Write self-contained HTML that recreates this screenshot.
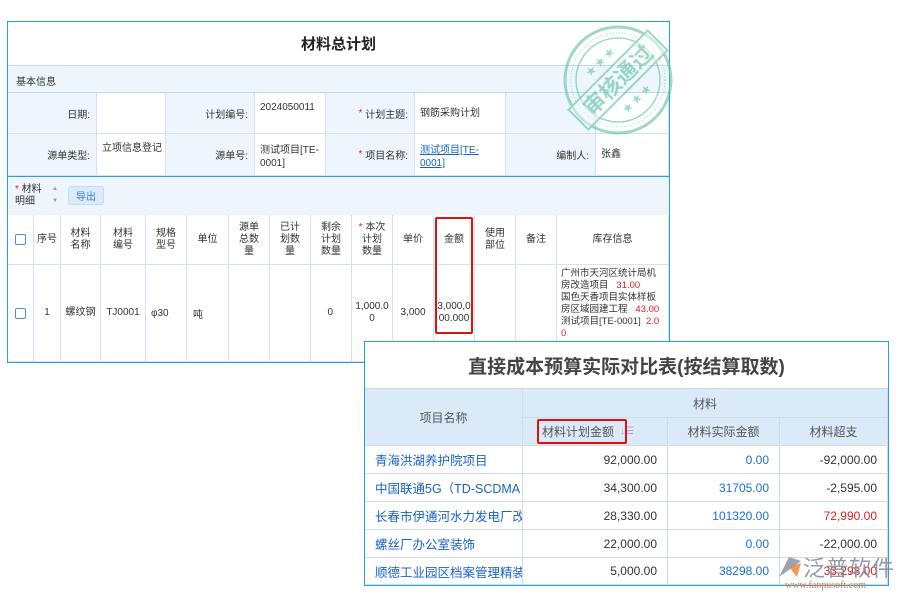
<!DOCTYPE html>
<html><head><meta charset="utf-8"><style>
*{box-sizing:border-box;margin:0;padding:0}
body{width:900px;height:600px;background:#fff;position:relative;overflow:hidden;font-family:"Liberation Sans","Noto Sans CJK SC",sans-serif;font-size:10px;color:#333}
.a{position:absolute}
.p1{left:7px;top:21px;width:663px;height:342px;border:1px solid #2a9ee0;background:#fff}
.c{position:absolute;border-right:1px solid #d6e3ee;border-bottom:1px solid #d6e3ee;display:flex;align-items:center;font-size:10px}
.lb{background:#eef5fd;justify-content:flex-end;padding-right:6px}
.v{background:#fff;padding-left:5px;align-items:flex-start;padding-top:8px;line-height:13px}
.h{background:#fff;justify-content:center;text-align:center;line-height:12px}
.r{color:#e02020}
.p2{left:364px;top:341px;width:525px;height:245px;border:1px solid #2a9ee0;background:#fff}
.t2{position:absolute;border-right:1px solid #d0dde8;border-bottom:1px solid #d0dde8;display:flex;align-items:center;font-size:12px}
.hd{background:#dbeaf9;justify-content:center;color:#555}
.nm{color:#1a63c6;padding-left:10px;white-space:nowrap;overflow:hidden;font-size:12.5px}
.num{justify-content:flex-end;padding-right:10px}
.bl{color:#1a6fe0}
</style></head><body>
<div class="a p1"></div>
<div class="a" style="left:8px;top:22px;width:661px;height:43px;display:flex;align-items:center;justify-content:center;font-size:15px;font-weight:bold;color:#222">材料总计划</div>
<div class="a" style="left:8px;top:65px;width:661px;height:28px;background:#eef5fd;border-top:1px solid #bfd9ef;border-bottom:1px solid #bfd9ef;padding:7px 8px;font-size:10px">基本信息</div>
<div class="c lb" style="left:8px;top:93px;width:89px;height:41px">日期:</div>
<div class="c v" style="left:97px;top:93px;width:69px;height:41px"></div>
<div class="c lb" style="left:166px;top:93px;width:89px;height:41px">计划编号:</div>
<div class="c v" style="left:255px;top:93px;width:71px;height:41px">2024050011</div>
<div class="c lb" style="left:326px;top:93px;width:89px;height:41px"><span class="r">*</span>&nbsp;计划主题:</div>
<div class="c v" style="left:415px;top:93px;width:91px;height:41px;align-items:center;padding-top:0">钢筋采购计划</div>
<div class="c lb" style="left:506px;top:93px;width:90px;height:41px"></div>
<div class="c v" style="left:596px;top:93px;width:73px;height:41px"></div>
<div class="c lb" style="left:8px;top:134px;width:89px;height:42px">源单类型:</div>
<div class="c v" style="left:97px;top:134px;width:69px;height:42px">立项信息登记</div>
<div class="c lb" style="left:166px;top:134px;width:89px;height:42px">源单号:</div>
<div class="c v" style="left:255px;top:134px;width:71px;height:42px;padding-top:10px;display:block">测试项目[TE-<br>0001]</div>
<div class="c lb" style="left:326px;top:134px;width:89px;height:42px"><span class="r">*</span>&nbsp;项目名称:</div>
<div class="c v" style="left:415px;top:134px;width:91px;height:42px;padding-top:10px;display:block"><span style="color:#1a63c6;text-decoration:underline">测试项目[TE-<br>0001]</span></div>
<div class="c lb" style="left:506px;top:134px;width:90px;height:42px">编制人:</div>
<div class="c v" style="left:596px;top:134px;width:73px;height:42px;align-items:center;padding-top:0">张鑫</div>
<div class="a" style="left:8px;top:176px;width:661px;height:39px;background:#eef5fd;border-top:1px solid #2a9ee0"></div>
<div class="a" style="left:15px;top:184px;font-size:10px;line-height:12px"><span class="r">*</span> 材料<br>明细</div>
<div class="a" style="left:52px;top:183px;font-size:6px;color:#999;line-height:12px">▲<br>▼</div>
<div class="a" style="left:68px;top:186px;width:36px;height:19px;background:#dcebfa;border:1px solid #c5ddf3;border-radius:3px;color:#2a7fd8;font-size:10px;display:flex;align-items:center;justify-content:center">导出</div>
<div class="c h" style="left:8px;top:215px;width:26px;height:50px"><span style="width:11px;height:11px;border:1px solid #4a90d9;border-radius:2px;display:block"></span></div>
<div class="c h" style="left:34px;top:215px;width:27px;height:50px">序号</div>
<div class="c h" style="left:61px;top:215px;width:40px;height:50px">材料<br>名称</div>
<div class="c h" style="left:101px;top:215px;width:45px;height:50px">材料<br>编号</div>
<div class="c h" style="left:146px;top:215px;width:41px;height:50px">规格<br>型号</div>
<div class="c h" style="left:187px;top:215px;width:42px;height:50px">单位</div>
<div class="c h" style="left:229px;top:215px;width:41px;height:50px">源单<br>总数<br>量</div>
<div class="c h" style="left:270px;top:215px;width:41px;height:50px">已计<br>划数<br>量</div>
<div class="c h" style="left:311px;top:215px;width:41px;height:50px">剩余<br>计划<br>数量</div>
<div class="c h" style="left:352px;top:215px;width:41px;height:50px"><span><span class="r">*</span> 本次<br>计划<br>数量</span></div>
<div class="c h" style="left:393px;top:215px;width:41px;height:50px">单价</div>
<div class="c h" style="left:434px;top:215px;width:41px;height:50px">金额</div>
<div class="c h" style="left:475px;top:215px;width:41px;height:50px">使用<br>部位</div>
<div class="c h" style="left:516px;top:215px;width:41px;height:50px">备注</div>
<div class="c h" style="left:557px;top:215px;width:112px;height:50px">库存信息</div>
<div class="c h" style="left:8px;top:265px;width:26px;height:97px"><span style="width:11px;height:11px;border:1px solid #4a90d9;border-radius:2px;display:block"></span></div>
<div class="c h" style="left:34px;top:265px;width:27px;height:97px">1</div>
<div class="c h" style="left:61px;top:265px;width:40px;height:97px">螺纹钢</div>
<div class="c h" style="left:101px;top:265px;width:45px;height:97px">TJ0001</div>
<div class="c" style="left:146px;top:265px;width:41px;height:97px;padding-left:5px">φ30</div>
<div class="c" style="left:187px;top:265px;width:42px;height:97px;padding-left:6px">吨</div>
<div class="c" style="left:229px;top:265px;width:41px;height:97px"></div>
<div class="c" style="left:270px;top:265px;width:41px;height:97px"></div>
<div class="c h" style="left:311px;top:265px;width:41px;height:97px;justify-content:flex-end;padding-right:18px">0</div>
<div class="c h" style="left:352px;top:265px;width:41px;height:97px">1,000.0<br>0</div>
<div class="c h" style="left:393px;top:265px;width:41px;height:97px">3,000</div>
<div class="c h" style="left:434px;top:265px;width:41px;height:97px">3,000,0<br>00.000</div>
<div class="c" style="left:475px;top:265px;width:41px;height:97px"></div>
<div class="c" style="left:516px;top:265px;width:41px;height:97px"></div>
<div class="c" style="left:557px;top:265px;width:112px;height:97px;display:block;padding:3px 0 0 4px;line-height:12px;font-size:9.5px;white-space:nowrap;overflow:hidden">广州市天河区统计局机<br>房改造项目 &nbsp;&nbsp;<span class="r">31.00</span><br>国色天香项目实体样板<br>房区域园建工程 &nbsp;&nbsp;<span class="r">43.00</span><br>测试项目[TE-0001] &nbsp;<span class="r">2.0</span><br><span class="r">0</span></div>
<div class="a" style="left:435px;top:217px;width:38px;height:117px;border:2px solid #e01010;border-radius:2px"></div>
<svg class="a" style="left:560px;top:22px" width="115" height="115" viewBox="0 0 115 115">
<g fill="none" stroke="#5dc2a0" opacity="0.6">
<circle cx="58" cy="58" r="53" stroke-width="3"/>
<circle cx="58" cy="58" r="47" stroke-width="1" stroke-dasharray="1 2"/>
<circle cx="58" cy="58" r="42" stroke-width="1.5"/>
<g transform="rotate(-45 58 58)">
<rect x="2" y="44" width="112" height="28" fill="#fff" fill-opacity="0.5" stroke-width="2"/>
<text x="58" y="66" text-anchor="middle" font-size="22" font-weight="bold" fill="#5dc2a0" stroke="none" font-family="'Noto Sans CJK SC',sans-serif">审核通过</text>
<text x="58" y="36" text-anchor="middle" font-size="10" fill="#5dc2a0" stroke="none">★ ★ ★</text>
<text x="58" y="88" text-anchor="middle" font-size="10" fill="#5dc2a0" stroke="none">★ ★ ★</text>
</g></g></svg>
<div class="a p2"></div>
<div class="a" style="left:365px;top:342px;width:523px;height:47px;display:flex;align-items:center;justify-content:center;font-size:19px;font-weight:bold;color:#444;border-bottom:1px solid #c5d8ea">直接成本预算实际对比表(按结算取数)</div>
<div class="t2 hd" style="left:365px;top:389px;width:158px;height:57px">项目名称</div>
<div class="t2 hd" style="left:523px;top:389px;width:365px;height:29px">材料</div>
<div class="t2 hd" style="left:523px;top:418px;width:145px;height:28px;padding-right:14px">材料计划金额 <span style="color:#aaa;font-size:10px;margin-left:6px">↓☰</span></div>
<div class="t2 hd" style="left:668px;top:418px;width:112px;height:28px">材料实际金额</div>
<div class="t2 hd" style="left:780px;top:418px;width:108px;height:28px">材料超支</div>
<div class="a" style="left:537px;top:419px;width:90px;height:25px;border:2px solid #e01010;border-radius:2px"></div>
<div class="t2 nm" style="left:365px;top:446px;width:158px;height:28px">青海洪湖养护院项目</div>
<div class="t2 num" style="left:523px;top:446px;width:145px;height:28px">92,000.00</div>
<div class="t2 num bl" style="left:668px;top:446px;width:112px;height:28px">0.00</div>
<div class="t2 num" style="left:780px;top:446px;width:108px;height:28px">-92,000.00</div>
<div class="t2 nm" style="left:365px;top:474px;width:158px;height:28px">中国联通5G（TD-SCDMA</div>
<div class="t2 num" style="left:523px;top:474px;width:145px;height:28px">34,300.00</div>
<div class="t2 num bl" style="left:668px;top:474px;width:112px;height:28px">31705.00</div>
<div class="t2 num" style="left:780px;top:474px;width:108px;height:28px">-2,595.00</div>
<div class="t2 nm" style="left:365px;top:502px;width:158px;height:28px">长春市伊通河水力发电厂改</div>
<div class="t2 num" style="left:523px;top:502px;width:145px;height:28px">28,330.00</div>
<div class="t2 num bl" style="left:668px;top:502px;width:112px;height:28px">101320.00</div>
<div class="t2 num r" style="left:780px;top:502px;width:108px;height:28px">72,990.00</div>
<div class="t2 nm" style="left:365px;top:530px;width:158px;height:28px">螺丝厂办公室装饰</div>
<div class="t2 num" style="left:523px;top:530px;width:145px;height:28px">22,000.00</div>
<div class="t2 num bl" style="left:668px;top:530px;width:112px;height:28px">0.00</div>
<div class="t2 num" style="left:780px;top:530px;width:108px;height:28px">-22,000.00</div>
<div class="t2 nm" style="left:365px;top:558px;width:158px;height:27px">顺德工业园区档案管理精装</div>
<div class="t2 num" style="left:523px;top:558px;width:145px;height:27px">5,000.00</div>
<div class="t2 num bl" style="left:668px;top:558px;width:112px;height:27px">38298.00</div>
<div class="t2 num r" style="left:780px;top:558px;width:108px;height:27px">33,298.00</div>
<svg class="a" style="left:775px;top:553px" width="30" height="28" viewBox="0 0 30 28"><path d="M4 24 L14 4 L26 8 L18 14 Z" fill="#8a94a8" opacity="0.85"/><path d="M14 14 L26 10 L22 24 Z" fill="#e98a3a" opacity="0.85"/></svg>
<div class="a" style="left:803px;top:551px;font-size:22px;color:#8a8f9c;opacity:0.9;font-family:'Noto Sans CJK SC',sans-serif;letter-spacing:1px">泛普软件</div>
<div class="a" style="left:785px;top:580px;font-size:10px;color:#e07a3a;font-family:'Liberation Serif',serif">www.fanpusoft.com</div>
</body></html>
